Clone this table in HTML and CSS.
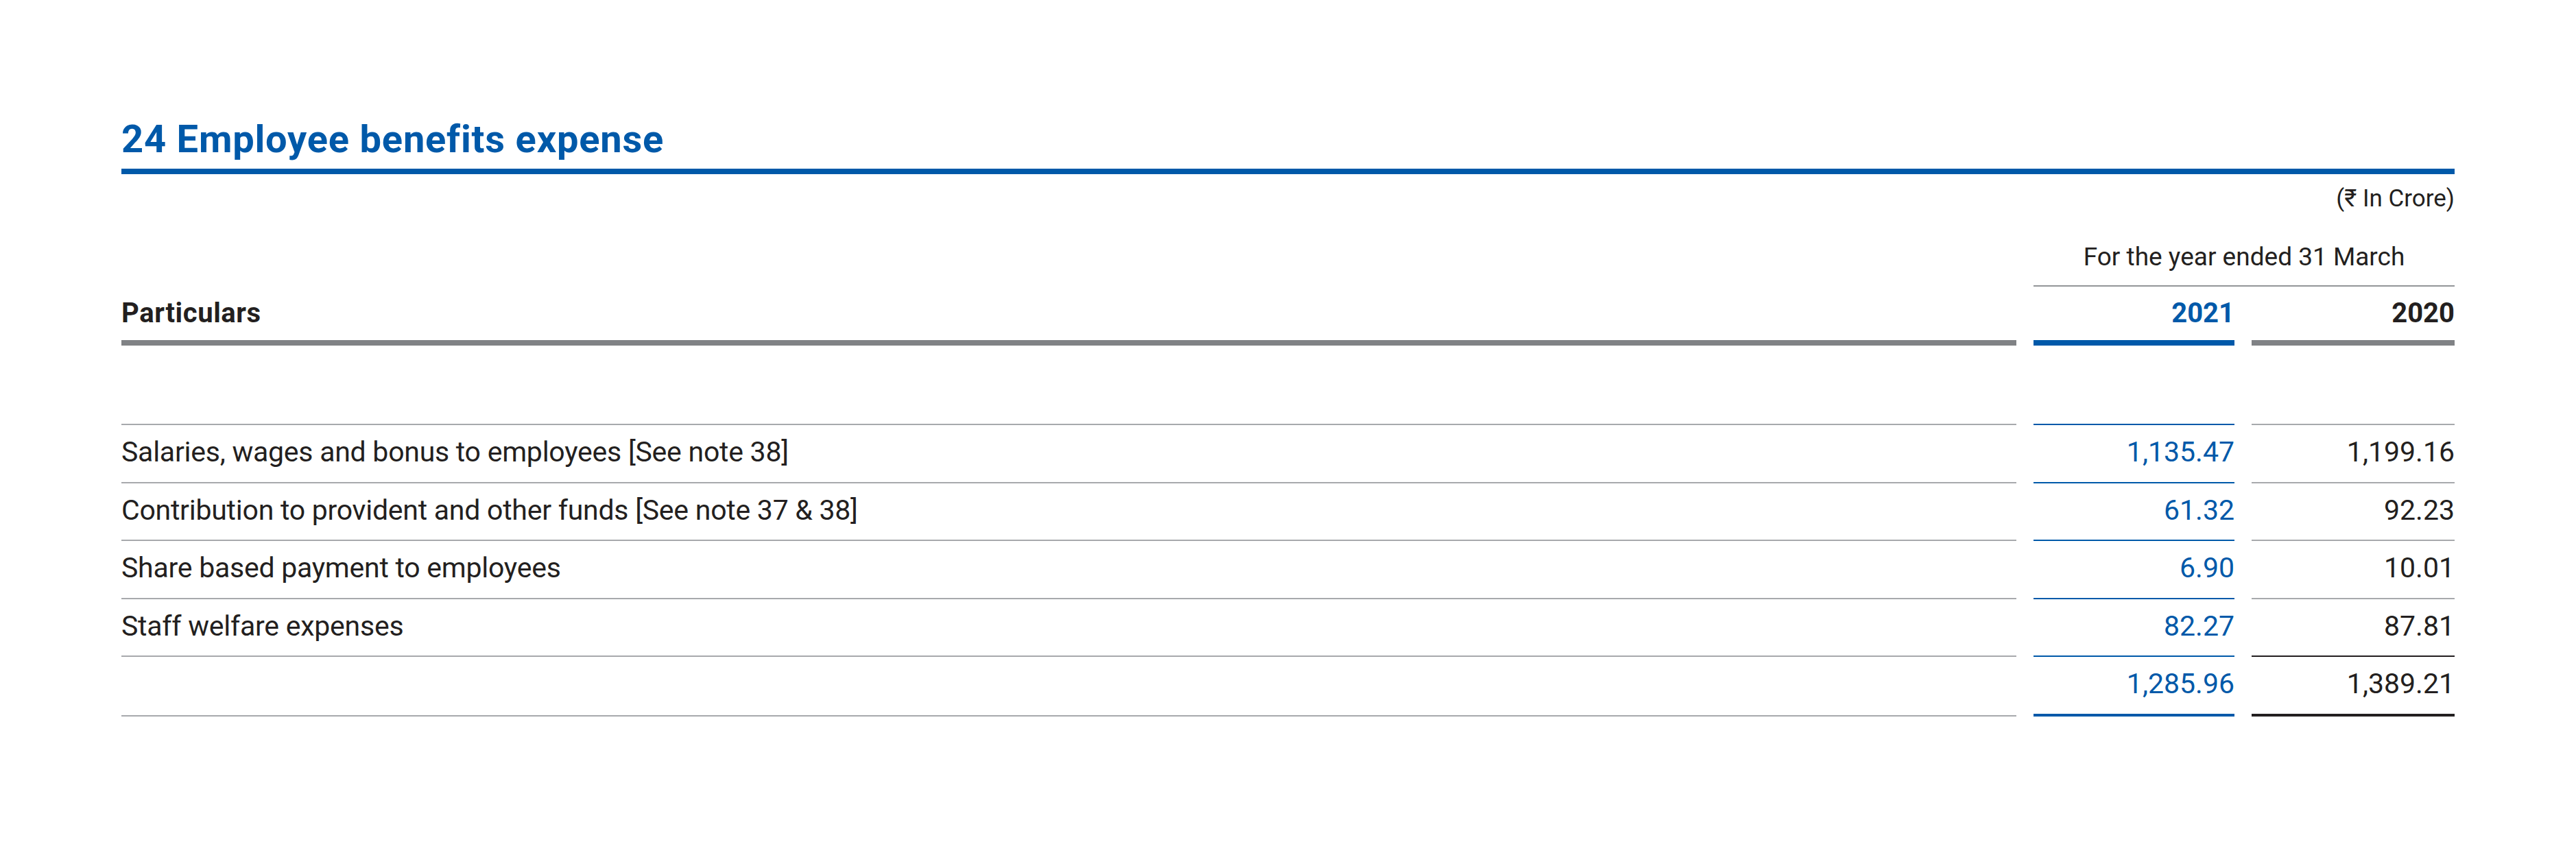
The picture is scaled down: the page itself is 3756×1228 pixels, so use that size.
FILE: index.html
```
<!DOCTYPE html>
<html lang="en">
<head>
  <meta charset="UTF-8" />
  <title>24 Employee benefits expense</title>
  <link rel="stylesheet" href="styles.css">
</head>
<body>

  <section class="note">
    <h2 class="note-title">24 Employee benefits expense</h2>
    <p class="unit">(₹ In Crore)</p>

    <table class="fin-table">
      <thead>
        <tr class="period-row">
          <th></th>
          <th class="period" colspan="2">For the year ended 31 March</th>
        </tr>
        <tr class="head-row">
          <th class="label">Particulars</th>
          <th class="cur">2021</th>
          <th class="prev">2020</th>
        </tr>
      </thead>
      <tbody>
        <tr class="spacer"><td colspan="3"></td></tr>
        <tr>
          <td class="label">Salaries, wages and bonus to employees [See note 38]</td>
          <td class="cur">1,135.47</td>
          <td class="prev">1,199.16</td>
        </tr>
        <tr>
          <td class="label">Contribution to provident and other funds [See note 37 &amp; 38]</td>
          <td class="cur">61.32</td>
          <td class="prev">92.23</td>
        </tr>
        <tr>
          <td class="label">Share based payment to employees</td>
          <td class="cur">6.90</td>
          <td class="prev">10.01</td>
        </tr>
        <tr>
          <td class="label">Staff welfare expenses</td>
          <td class="cur">82.27</td>
          <td class="prev">87.81</td>
        </tr>
        <tr class="total">
          <td class="label"></td>
          <td class="cur">1,285.96</td>
          <td class="prev">1,389.21</td>
        </tr>
      </tbody>
    </table>
  </section>

</body>
</html>
```

FILE: styles.css
```
body {
  margin: 0;
  padding: 0;
  background-color: #fff;
  color: #231f20;
  font-family: Roboto, 'Noto Sans', 'DejaVu Sans', sans-serif;
}

.note {
  padding: 175px 177px 0;
}

.note-title {
  margin: 0;
  padding-bottom: 15px;
  font-size: 56px;
  line-height: 56px;
  font-weight: 700;
  letter-spacing: 0.8px;
  color: #0059a9;
  border-bottom: 8px solid #0059a9;
}

.unit {
  margin: 16px 0 0;
  text-align: right;
  font-size: 35px;
  line-height: 40px;
}

/* table */
.fin-table {
  width: calc(100% + 50px);
  margin: 45px -25px 0;
  border-collapse: separate;
  border-spacing: 25px 0;
}

.fin-table th,
.fin-table td {
  padding: 0;
  text-align: right;
  font-weight: 400;
}

.fin-table .label {
  text-align: left;
}

.fin-table .cur {
  width: 293px;
  color: #0059a9;
}

.fin-table .prev {
  width: 296px;
}

.period {
  text-align: center !important;
  font-size: 37px;
  line-height: 40px;
  padding-bottom: 21px !important;
  border-bottom: 2px solid #939598;
}

.head-row th {
  padding: 15px 0 !important;
  font-size: 40px;
  line-height: 48px;
  font-weight: 700 !important;
  border-bottom: 8px solid #808285;
}

.head-row th.label {
  letter-spacing: 0.6px;
}

.head-row th.cur {
  border-bottom-color: #0059a9;
}

.spacer td {
  height: 114px;
}

tbody tr:not(.spacer) td {
  padding: 15px 0 19.5px;
  font-size: 41px;
  line-height: 48px;
  border-top: 2px solid #a7a9ac;
}

tbody td.label {
  letter-spacing: -0.25px;
}

tbody tr:not(.spacer) td.cur {
  border-top-color: #0059a9;
}

.total td {
  border-bottom: 2px solid #a7a9ac;
}

.total td.cur {
  border-bottom: 4px solid #0059a9;
}

.total td.prev {
  border-top-color: #231f20 !important;
  border-bottom: 4px solid #231f20;
}
```
